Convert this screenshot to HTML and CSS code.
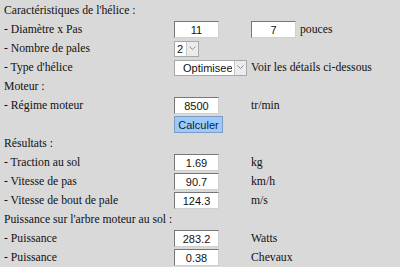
FILE: index.html
```html
<!DOCTYPE html>
<html lang="fr">
<head>
    <meta charset="UTF-8">
    <title>Calcul d'hélice</title>
    <link rel="stylesheet" href="styles.css">
</head>
<body>
    <div class="calc">
        <div class="section">Caractéristiques de l'hélice :</div>

        <div class="label">- Diamètre x Pas</div>
        <div class="field"><input type="text" value="11"></div>
        <div class="unit"><input type="text" value="7"> pouces</div>

        <div class="label">- Nombre de pales</div>
        <div class="field">
            <span class="select-wrap small">
                <select><option>2</option></select>
                <span class="arrow"><svg width="7" height="5" viewBox="0 0 7 5"><path d="M0.5 0.5 L3.5 3.5 L6.5 0.5" fill="none" stroke="#8a8a8a" stroke-width="1"/></svg></span>
            </span>
        </div>
        <div class="unit"></div>

        <div class="label">- Type d'hélice</div>
        <div class="field">
            <span class="select-wrap wide">
                <select><option>Optimisee</option></select>
                <span class="arrow"><svg width="7" height="5" viewBox="0 0 7 5"><path d="M0.5 0.5 L3.5 3.5 L6.5 0.5" fill="none" stroke="#8a8a8a" stroke-width="1"/></svg></span>
            </span>
        </div>
        <div class="unit">Voir les détails ci-dessous</div>

        <div class="section">Moteur :</div>

        <div class="label">- Régime moteur</div>
        <div class="field"><input type="text" value="8500"></div>
        <div class="unit">tr/min</div>

        <div class="label"></div>
        <div class="field"><button type="button" class="calc-btn">Calculer</button></div>
        <div class="unit"></div>

        <div class="section">Résultats :</div>

        <div class="label">- Traction au sol</div>
        <div class="field"><input type="text" value="1.69"></div>
        <div class="unit">kg</div>

        <div class="label">- Vitesse de pas</div>
        <div class="field"><input type="text" value="90.7"></div>
        <div class="unit">km/h</div>

        <div class="label">- Vitesse de bout de pale</div>
        <div class="field"><input type="text" value="124.3"></div>
        <div class="unit">m/s</div>

        <div class="section">Puissance sur l'arbre moteur au sol :</div>

        <div class="label">- Puissance</div>
        <div class="field"><input type="text" value="283.2"></div>
        <div class="unit">Watts</div>

        <div class="label">- Puissance</div>
        <div class="field"><input type="text" value="0.38"></div>
        <div class="unit">Chevaux</div>
    </div>
</body>
</html>
```

FILE: styles.css
```css
* {
    margin: 0;
    padding: 0;
    box-sizing: border-box;
}

body {
    background-color: #d9d9d9;
    color: #111;
    font-family: "Liberation Serif", "Times New Roman", serif;
    font-size: 11.7px;
}

.calc {
    display: grid;
    grid-template-columns: 170px 77px 1fr;
    grid-auto-rows: 19px;
    padding: 1px 0 0 4px;
    align-items: center;
}

.section {
    grid-column: 1 / 4;
}

.label,
.unit {
    white-space: nowrap;
}

.unit {
    display: flex;
    align-items: center;
    gap: 4px;
}

input[type="text"] {
    width: 45px;
    height: 17px;
    border: 1px solid;
    border-color: #777 #d0d0d0 #d0d0d0 #777;
    background-color: white;
    font-family: "Liberation Sans", Arial, sans-serif;
    font-size: 11px;
    text-align: center;
    color: #111;
}

.select-wrap {
    position: relative;
    display: inline-block;
    vertical-align: middle;
}

.select-wrap select {
    appearance: none;
    -webkit-appearance: none;
    height: 16px;
    border: 1px solid #a8a8a8;
    background-color: white;
    font-family: "Liberation Sans", Arial, sans-serif;
    font-size: 11px;
    color: #111;
    padding: 0 14px 0 2px;
}

.select-wrap.small select {
    width: 25px;
}

.select-wrap.wide select {
    width: 73px;
    padding-left: 8px;
}

.select-wrap .arrow {
    position: absolute;
    top: 1px;
    right: 1px;
    width: 12px;
    height: 14px;
    background-color: #ececec;
    border-left: 1px solid #c8c8c8;
    display: flex;
    align-items: center;
    justify-content: center;
}

.calc-btn {
    width: 49px;
    height: 17px;
    background-color: #9ccbfb;
    border: 1px solid #7d9cbf;
    font-family: "Liberation Sans", Arial, sans-serif;
    font-size: 11px;
    color: #10203a;
    cursor: pointer;
}
```
